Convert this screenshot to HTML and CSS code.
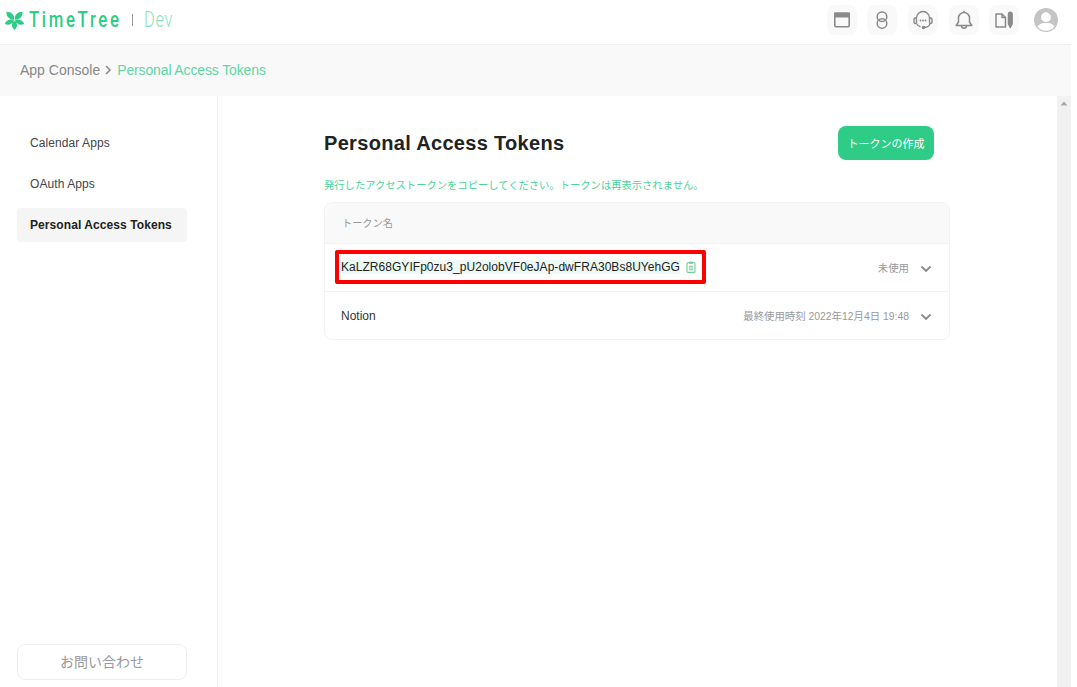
FILE: index.html
```html
<!DOCTYPE html>
<html lang="en">
<head>
    <meta charset="UTF-8">
    <meta name="viewport" content="width=device-width, initial-scale=1.0">
    <title>Personal Access Tokens</title>
    <link rel="stylesheet" href="styles.css">
</head>
<body>
    <div class="window">
        <header class="topbar">
            <div class="brand">
                <svg class="brand-mark" width="21" height="20" viewBox="-10.5 -10 21 20">
                    <g fill="#2ecc87">
                        <path transform="rotate(-45)" d="M0 -.5 C-3.6 -3.5 -3.6 -8 0 -11.5 C3.6 -8 3.6 -3.5 0 -.5Z"/>
                        <path transform="rotate(45)" d="M0 -.5 C-3.6 -3.5 -3.6 -8 0 -11.5 C3.6 -8 3.6 -3.5 0 -.5Z"/>
                        <path transform="rotate(-112)" d="M0 -.5 C-3.2 -3.5 -3.2 -7.5 0 -10.5 C3.2 -7.5 3.2 -3.5 0 -.5Z"/>
                        <path transform="rotate(112)" d="M0 -.5 C-3.2 -3.5 -3.2 -7.5 0 -10.5 C3.2 -7.5 3.2 -3.5 0 -.5Z"/>
                        <path transform="rotate(180)" d="M0 -.5 C-3.4 -3.5 -3.4 -7 0 -10 C3.4 -7 3.4 -3.5 0 -.5Z"/>
                    </g>
                </svg>
                <span class="brand-name">TimeTree</span>
                <span class="brand-sep"></span>
                <span class="brand-dev">Dev</span>
            </div>
            <nav class="topnav">
                <a class="navicon">
                    <svg width="18" height="18" viewBox="0 0 18 18" fill="none" stroke="#8a8a8a" stroke-width="1.6"><rect x="1.8" y="2.3" width="14.4" height="13.4" rx="1.2"/><rect x="1.8" y="2.3" width="14.4" height="3.4" fill="#8a8a8a"/></svg>
                </a>
                <a class="navicon">
                    <svg width="18" height="18" viewBox="0 0 18 18" fill="none" stroke="#8a8a8a" stroke-width="1.5"><rect x="4.2" y="1" width="9.6" height="9.4" rx="4.7"/><rect x="4.2" y="7.8" width="9.6" height="9.4" rx="4.7"/></svg>
                </a>
                <a class="navicon">
                    <svg width="20" height="20" viewBox="0 0 20 20" fill="none" stroke="#8a8a8a" stroke-width="1.4"><path d="M3.5 8.5 V8 a6.5 6.5 0 0 1 13 0 V8.5"/><path d="M3.5 13.5 C4.5 15.5 6 16.5 7.5 16.8"/><rect x="1" y="8" width="2.5" height="5.5" rx="1.2"/><rect x="16.5" y="8" width="2.5" height="5.5" rx="1.2"/><path d="M16.8 13.5 c0 2.5 -3 4 -6 4"/><circle cx="10.5" cy="17.5" r="1.1" fill="#8a8a8a"/><circle cx="7.5" cy="10.5" r=".9" fill="#8a8a8a" stroke="none"/><circle cx="10" cy="10.5" r=".9" fill="#8a8a8a" stroke="none"/><circle cx="12.5" cy="10.5" r=".9" fill="#8a8a8a" stroke="none"/></svg>
                </a>
                <a class="navicon">
                    <svg width="18" height="20" viewBox="0 0 18 20" fill="none" stroke="#8a8a8a" stroke-width="1.5"><path d="M1.2 15.5 H16.8 L14.5 12 V8 a5.5 5.5 0 0 0 -11 0 V12 Z" stroke-linejoin="round"/><path d="M9 .8 V2.5"/><path d="M6.5 15.8 a2.5 2.5 0 0 0 5 0"/></svg>
                </a>
                <a class="navicon">
                    <svg width="20" height="18" viewBox="0 0 20 18" fill="none" stroke="#8a8a8a" stroke-width="1.5"><path d="M2 3 H8 L11.5 6.5 V16 H2 Z" stroke-linejoin="round"/><path d="M8 3 V6.5 H11.5"/><path d="M14.5 3 a1.8 1.8 0 0 1 3.6 0 V13 L16.3 16.5 L14.5 13 Z" fill="#8a8a8a" stroke-linejoin="round"/></svg>
                </a>
                <a class="avatar">
                    <svg width="24" height="24" viewBox="0 0 24 24"><circle cx="12" cy="12" r="12" fill="#c4c4c4"/><circle cx="12" cy="9.2" r="4.9" fill="#fff"/><path d="M3.6 18.8 C5.5 15.2 9 15 12 15 C15 15 18.5 15.2 20.4 18.8 A10.8 10.8 0 0 1 3.6 18.8Z" fill="#fff"/></svg>
                </a>
            </nav>
        </header>

        <div class="crumbs">
            <span class="crumb">App Console</span>
            <svg class="crumb-arrow" width="8" height="10" viewBox="0 0 8 10" fill="none" stroke="#888" stroke-width="1.5"><path d="M2 1 L6 5 L2 9"/></svg>
            <span class="crumb-current">Personal Access Tokens</span>
        </div>

        <div class="layout">
            <aside class="sidebar">
                <ul class="sidemenu">
                    <li class="sideitem">Calendar Apps</li>
                    <li class="sideitem">OAuth Apps</li>
                    <li class="sideitem active">Personal Access Tokens</li>
                </ul>
                <button class="contact">お問い合わせ</button>
            </aside>

            <main class="content">
                <div class="content-head">
                    <h1>Personal Access Tokens</h1>
                    <button class="button">トークンの作成</button>
                </div>
                <p class="notice">発行したアクセストークンをコピーしてください。トークンは再表示されません。</p>
                <div class="tokens">
                    <div class="tokens-head">トークン名</div>
                    <div class="token-row new">
                        <div class="token-value">
                            <span class="token-text">KaLZR68GYIFp0zu3_pU2olobVF0eJAp-dwFRA30Bs8UYehGG</span>
                            <svg width="10" height="12" viewBox="0 0 10 12" fill="none" stroke="#6fcf97" stroke-width="1.1"><rect x="1" y="1.8" width="8" height="9.6" rx=".8"/><rect x="3" y=".6" width="4" height="2.2" fill="#6fcf97" stroke="none"/><path d="M3 5.3 H7 M3 7 H7 M3 8.8 H7"/></svg>
                        </div>
                        <div class="token-meta">
                            <span>未使用</span>
                            <svg class="chevron" width="12" height="8" viewBox="0 0 12 8" fill="none" stroke="#8a8a8a" stroke-width="1.8"><path d="M1.5 1.5 L6 6 L10.5 1.5"/></svg>
                        </div>
                    </div>
                    <div class="token-row">
                        <div class="token-name">Notion</div>
                        <div class="token-meta">
                            <span>最終使用時刻 2022年12月4日 19:48</span>
                            <svg class="chevron" width="12" height="8" viewBox="0 0 12 8" fill="none" stroke="#8a8a8a" stroke-width="1.8"><path d="M1.5 1.5 L6 6 L10.5 1.5"/></svg>
                        </div>
                    </div>
                </div>
            </main>

            <div class="scrollbar">
                <svg width="8" height="5" viewBox="0 0 8 5"><path d="M4 .5 L7.5 4.5 H.5 Z" fill="#a8a8a8"/></svg>
            </div>
        </div>
    </div>
</body>
</html>
```

FILE: styles.css
```css
html, body {
    height: 100%;
}

body {
    margin: 0;
    background: #fff;
    color: #222;
    font-family: "Liberation Sans", "Noto Sans CJK JP", sans-serif;
    overflow: hidden;
}

.window {
    width: 1071px;
    height: 687px;
    display: flex;
    flex-direction: column;
}

.topbar {
    height: 45px;
    flex: none;
    display: flex;
    align-items: center;
    justify-content: space-between;
    border-bottom: 1px solid #f0f0f0;
    padding: 0 13px 5px 4px;
    box-sizing: border-box;
}

.brand {
    display: flex;
    align-items: center;
}

.brand-name {
    margin-left: 4px;
    width: 92px;
    color: #2ecc87;
    font-family: "Roboto", sans-serif;
    font-size: 22px;
    font-weight: 500;
    letter-spacing: 3.5px;
    white-space: nowrap;
    transform: scaleX(.76);
    transform-origin: left center;
}

.brand-sep {
    width: 1px;
    height: 12px;
    background: #999;
    margin-left: 11px;
}

.brand-dev {
    margin-left: 11px;
    color: #8be2bc;
    font-family: "Roboto", sans-serif;
    font-size: 22px;
    font-weight: 300;
    letter-spacing: 1px;
    transform: scaleX(.74);
    transform-origin: left center;
}

.topnav {
    display: flex;
    align-items: center;
    gap: 10.7px;
}

.navicon {
    width: 30px;
    height: 30px;
    display: flex;
    align-items: center;
    justify-content: center;
    background: #f9f9f9;
    border-radius: 8px;
}

.avatar {
    display: flex;
    margin-left: 4px;
}

.crumbs {
    height: 51px;
    flex: none;
    box-sizing: border-box;
    display: flex;
    align-items: center;
    padding: 0 0 2px 20px;
    background: #f9f9f9;
    font-size: 14px;
}

.crumb {
    color: #888;
}

.crumb-arrow {
    margin: 0 5px 0 4px;
}

.crumb-current {
    color: #5fd6a4;
    letter-spacing: -.13px;
}

.layout {
    flex: 1;
    display: flex;
    min-height: 0;
}

.sidebar {
    width: 218px;
    flex: none;
    box-sizing: border-box;
    border-right: 1px solid #f0f0f0;
    padding: 30px 30px 7px 17px;
    display: flex;
    flex-direction: column;
    justify-content: space-between;
}

.sidemenu {
    list-style: none;
    margin: 0;
    padding: 0;
    display: flex;
    flex-direction: column;
    gap: 7px;
}

.sideitem {
    height: 34px;
    line-height: 34px;
    padding-left: 13px;
    border-radius: 4px;
    font-size: 12px;
    letter-spacing: .08px;
    color: #444;
}

.sideitem.active {
    background: #f5f5f5;
    color: #222;
    font-weight: bold;
}

.contact {
    width: 170px;
    height: 36px;
    padding: 0 0 2px;
    background: #fff;
    border: 1px solid #eee;
    border-radius: 8px;
    color: #999;
    font-family: inherit;
    font-size: 14px;
}

.content {
    flex: 1;
    padding: 30px 107px 0 106px;
}

.content-head {
    display: flex;
    align-items: center;
    justify-content: space-between;
    padding-right: 16px;
}

h1 {
    margin: 0;
    font-size: 20px;
    font-weight: bold;
    letter-spacing: .32px;
    color: #222;
}

.button {
    width: 96px;
    height: 34px;
    padding: 0;
    border: none;
    border-radius: 8px;
    background: #2ecc87;
    color: #fff;
    font-family: inherit;
    font-size: 11px;
}

.notice {
    margin: 18px 0 0;
    font-size: 10.3px;
    line-height: 16px;
    color: #4ad39a;
    white-space: nowrap;
}

.tokens {
    margin-top: 8px;
    border: 1px solid #f3f3f3;
    border-radius: 8px;
    overflow: hidden;
}

.tokens-head {
    height: 40px;
    line-height: 41px;
    padding-left: 17px;
    background: #f9f9f9;
    font-size: 10.2px;
    color: #999;
}

.token-row {
    height: 48px;
    box-sizing: border-box;
    display: flex;
    align-items: center;
    justify-content: space-between;
    padding: 0 17px 0 16px;
    border-top: 1px solid #f3f3f3;
}

.token-row.new {
    padding-bottom: 1px;
}

.token-value {
    position: relative;
    display: flex;
    align-items: center;
    gap: 6px;
    font-size: 12px;
    letter-spacing: .04px;
}

.token-text {
    background: #edf9f4;
}

/* red marker drawn over the screenshot */
.token-row.new .token-value::after {
    content: "";
    position: absolute;
    left: -6px;
    top: -10px;
    bottom: -10px;
    width: 371px;
    box-sizing: border-box;
    border: 4px solid #f00;
    border-radius: 2px;
}

.token-name {
    font-size: 12px;
    color: #333;
}

.token-meta {
    display: flex;
    align-items: center;
    gap: 11px;
    font-size: 10.4px;
    color: #999;
}

.chevron {
    margin-top: 3px;
}

.scrollbar {
    width: 14px;
    flex: none;
    box-sizing: border-box;
    padding-top: 5px;
    background: #f1f1f1;
    display: flex;
    flex-direction: column;
    align-items: center;
}
```
